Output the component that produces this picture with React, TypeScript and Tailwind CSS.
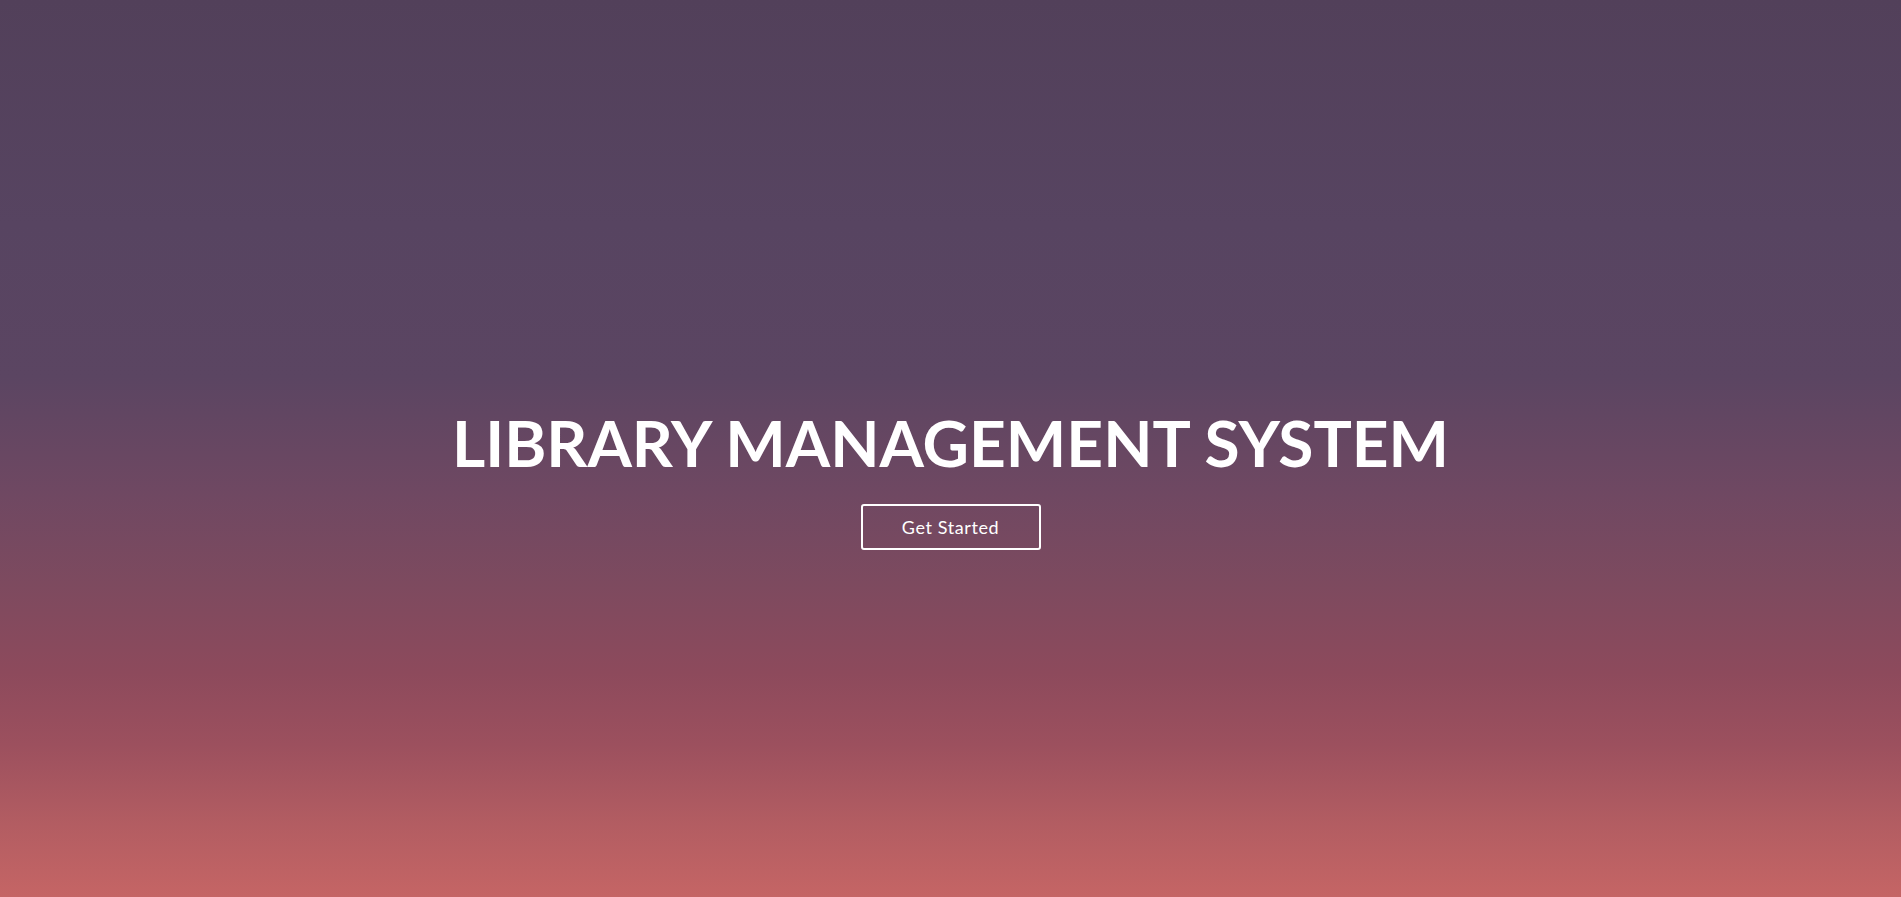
import React from 'react';

function App() {
    return (
        <main className="w-full h-screen flex flex-col items-center justify-center bg-[linear-gradient(180deg,#52405a_0%,#574461_25%,#5b4562_42%,#6f4862_55%,#7d4a5f_65%,#8d4a5c_75%,#9c505e_83%,#b35d62_92%,#c56565_100%)] font-['Lato',sans-serif] text-white">
            <h1 className="text-[64px] leading-[80px] font-bold mt-[56px]">LIBRARY MANAGEMENT SYSTEM</h1>
            <button className="mt-[21px] w-[180px] h-[46px] border-2 border-white rounded-[3px] text-[18px] tracking-[0.6px]">
                Get Started
            </button>
        </main>
    );
}

export default App;
